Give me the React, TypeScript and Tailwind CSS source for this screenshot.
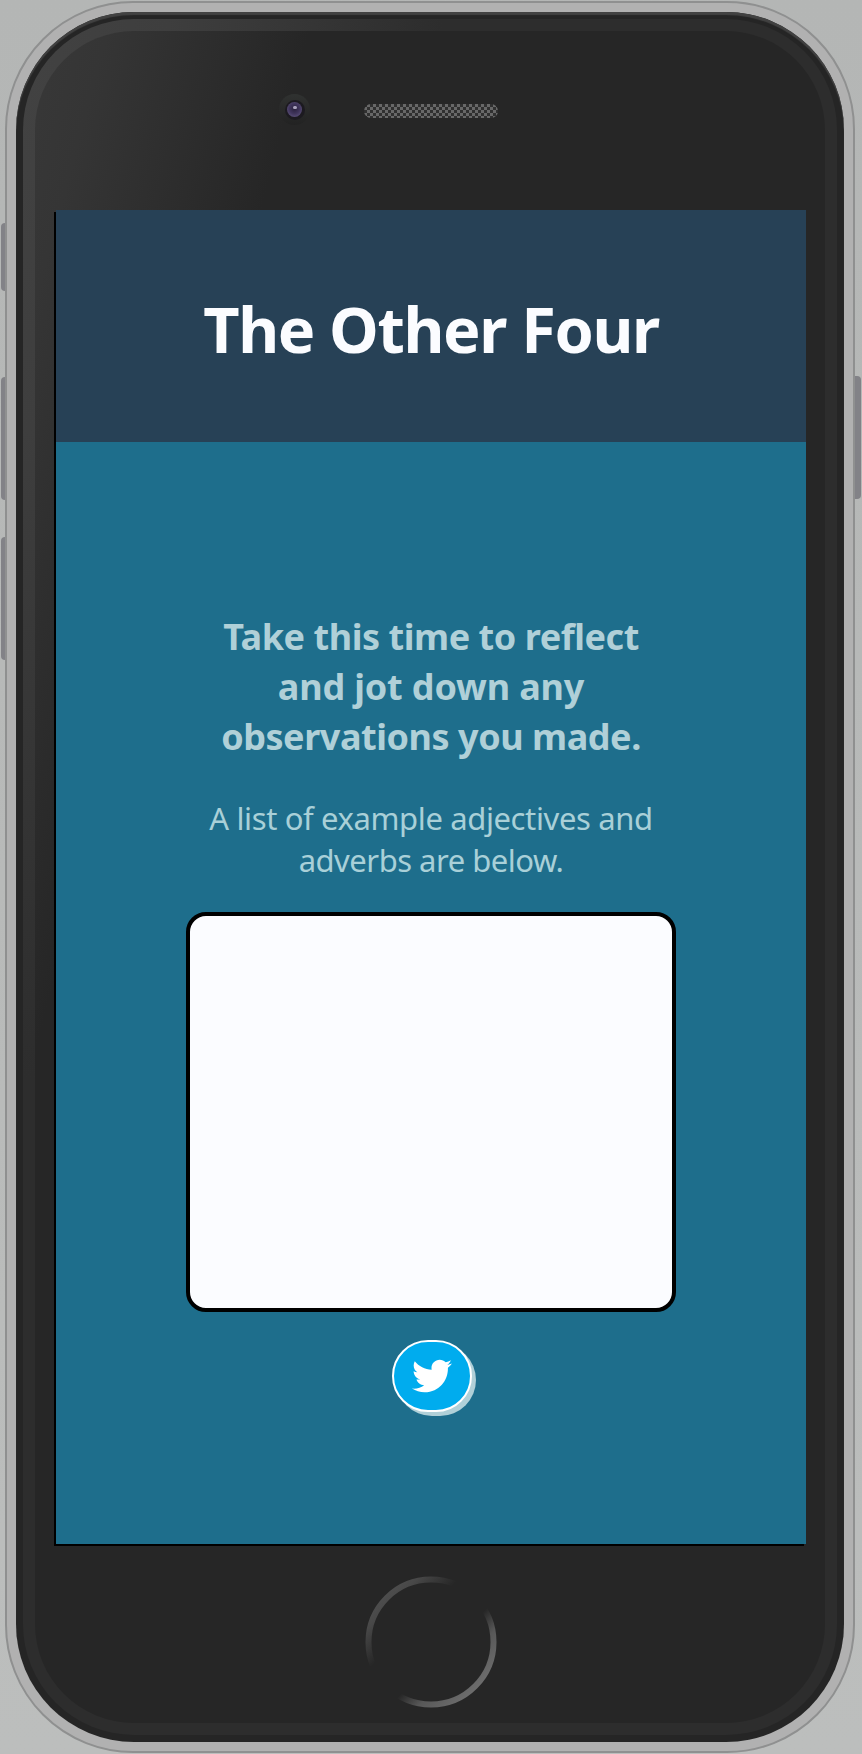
import React from "react";
import { FaTwitter } from "react-icons/fa";

function SideButton({ className }: { className: string }) {
  return <div className={"absolute bg-[#828287] " + className} />;
}

function Camera() {
  return (
    <div className="flex size-[31px] items-center justify-center rounded-full bg-linear-to-b from-[#303231] to-[#222222]">
      <div className="flex size-[20px] items-center justify-center rounded-full bg-[#1c1a20]">
        <div className="flex size-[15px] justify-center rounded-full bg-[radial-gradient(circle_at_50%_45%,#29213c_0%,#40355c_45%,#5b5078_80%,#342c49_100%)] pt-[4px]">
          <div className="h-[3px] w-[4px] rounded-full bg-[#aaa2bd]" />
        </div>
      </div>
    </div>
  );
}

function Speaker() {
  return (
    <div className="h-[14px] w-[134px] rounded-full bg-[#303030] bg-[repeating-conic-gradient(#686868_0%_25%,#303030_0%_50%)] bg-[length:6px_6px]" />
  );
}

function HomeButton() {
  return (
    <svg width="132" height="132" viewBox="0 0 132 132" fill="none">
      <defs>
        <linearGradient id="home-ring" x1="20" y1="20" x2="112" y2="112" gradientUnits="userSpaceOnUse">
          <stop offset="0" stopColor="#4d4d4d" />
          <stop offset="0.08" stopColor="#484848" />
          <stop offset="0.31" stopColor="#262626" />
          <stop offset="0.62" stopColor="#262626" />
          <stop offset="0.78" stopColor="#585858" />
          <stop offset="1" stopColor="#6c6c6c" />
        </linearGradient>
      </defs>
      <circle cx="66" cy="66" r="62.5" stroke="url(#home-ring)" strokeWidth="6" />
    </svg>
  );
}

export default function App() {
  return (
    <div className="relative h-[1754px] w-[862px] overflow-hidden bg-linear-to-b from-[#b4b6b5] to-[#bcbebd] px-[5px] pt-px font-['Noto_Sans','Open_Sans',sans-serif]">
      <SideButton className="left-[1px] top-[223px] h-[68px] w-[6px] rounded-l-[4px]" />
      <SideButton className="left-[1px] top-[377px] h-[123px] w-[6px] rounded-l-[4px]" />
      <SideButton className="left-[1px] top-[537px] h-[123px] w-[6px] rounded-l-[4px]" />
      <SideButton className="left-[854px] top-[376px] h-[123px] w-[7px] rounded-r-[4px]" />
      <div className="relative h-[1752px] w-[850px] rounded-[128px] border-2 border-[#8f9090] bg-[#b1b1b1] px-[9px] pt-[9px]">
        <div className="h-[1730px] w-[828px] rounded-[118px] bg-[#252525] px-[7px] pt-[7px] shadow-[inset_0_3px_1px_#424242]">
          <div className="h-[1716px] w-[814px] rounded-[111px] bg-[#2d2d2d] bg-[radial-gradient(ellipse_420px_1000px_at_0px_60px,#424242_0%,#3e3e3e_35%,#2d2d2d_100%)] px-[12px] pt-[12px]">
            <div className="flex h-[1692px] w-[790px] flex-col rounded-[99px] bg-[#262626] bg-[linear-gradient(105deg,#383838_0px,#353535_70px,#262626_265px)] px-[19px]">
              <div className="flex h-[179px] shrink-0 items-start gap-[54px] pl-[225px] pt-[63px]">
                <Camera />
                <div className="pt-[10px]">
                  <Speaker />
                </div>
              </div>
              <main className="ml-[2px] flex h-[1334px] w-[750px] shrink-0 flex-col items-center bg-[#1e6e8c] text-center shadow-[-2px_2px_0_#000]">
                <header className="flex h-[232px] w-full items-center justify-center bg-[#274156] pt-[5px]">
                  <h1 className="whitespace-nowrap text-[63px] font-bold leading-[86px] tracking-[-1.35px] text-[#fbfcff]">
                    The Other Four
                  </h1>
                </header>
                <h2 className="mt-[170px] whitespace-nowrap text-[36px] font-bold leading-[50px] text-[#b0d0d8]">
                  <span className="block tracking-[-0.45px]">Take this time to reflect</span>
                  <span className="block tracking-[-0.15px]">and jot down any</span>
                  <span className="block tracking-[-0.45px]">observations you made.</span>
                </h2>
                <p className="mt-[35px] whitespace-nowrap text-[31px] leading-[42px] text-[#a9d0d8]">
                  <span className="block tracking-[-0.38px]">A list of example adjectives and</span>
                  <span className="block tracking-[-0.5px]">adverbs are below.</span>
                </p>
                <textarea
                  aria-label="Observations"
                  className="mt-[31px] block h-[400px] w-[490px] shrink-0 resize-none rounded-[20px] border-4 border-black bg-[#fbfcff] p-4 text-[28px] text-black outline-none"
                />
                <button
                  aria-label="Share on Twitter"
                  className="mt-[28px] ml-[2px] flex h-[72px] w-[80px] shrink-0 items-center justify-center rounded-[36px] border-2 border-white bg-[#00acee] shadow-[4px_4px_0_#b0d0d8]"
                >
                  <FaTwitter className="size-[40px] text-white" />
                </button>
              </main>
              <div className="flex justify-center pl-px pt-[32px]">
                <HomeButton />
              </div>
            </div>
          </div>
        </div>
      </div>
    </div>
  );
}
